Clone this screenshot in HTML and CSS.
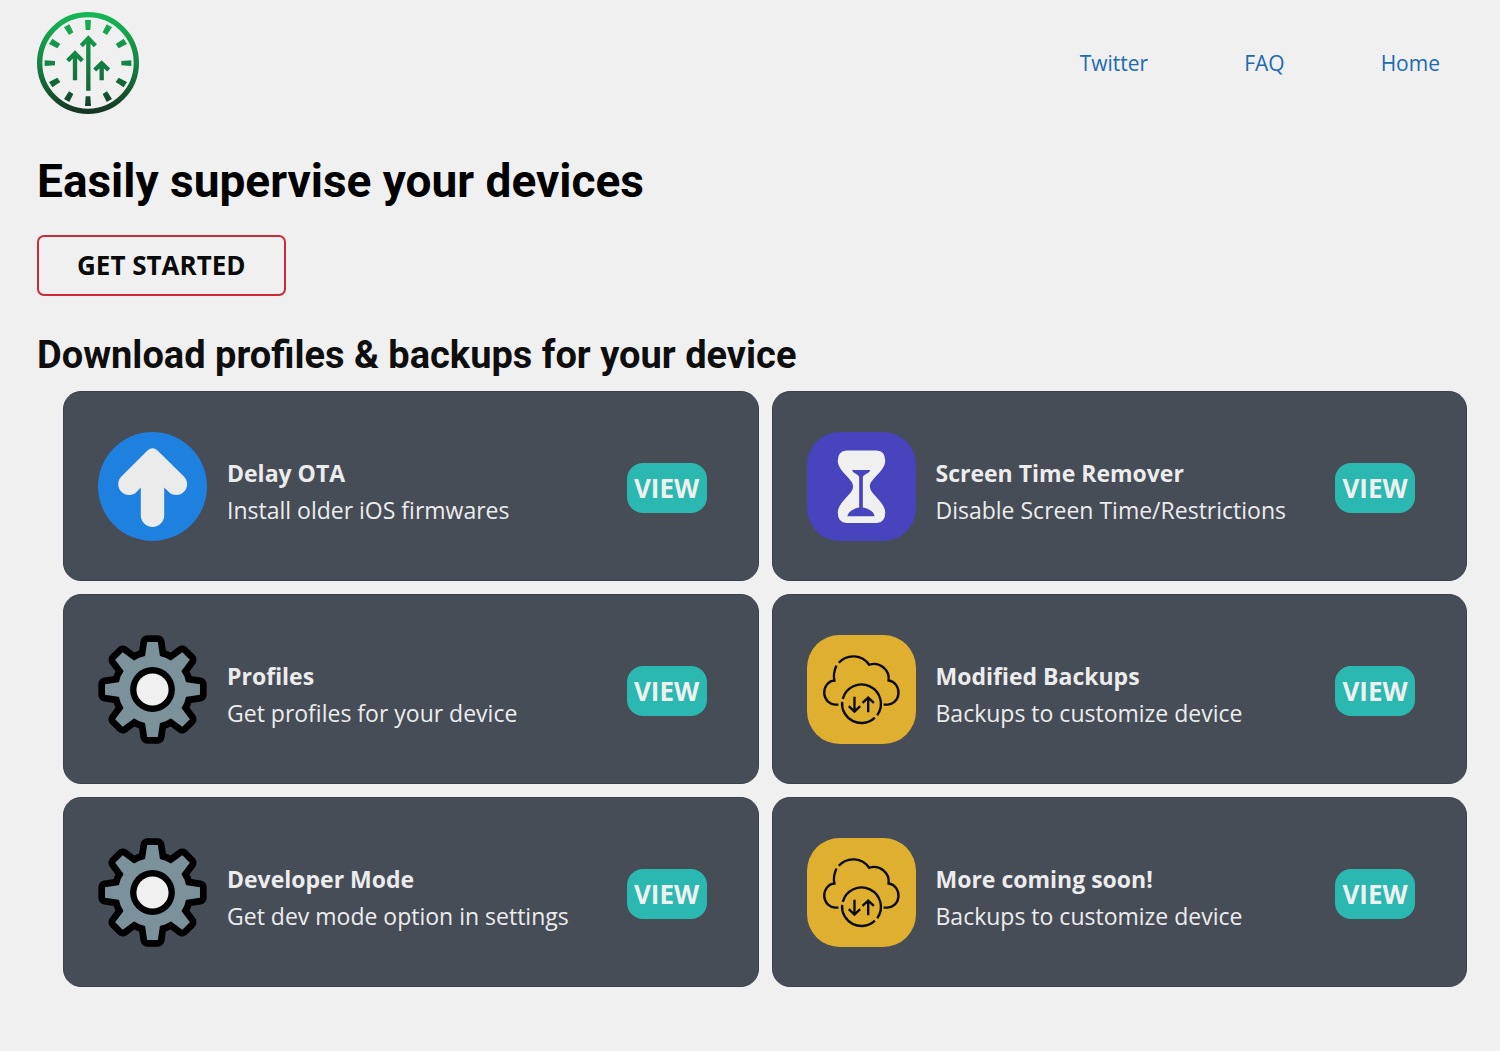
FILE: index.html
```html
<!DOCTYPE html>
<html lang="en">
<head>
  <meta charset="utf-8">
  <meta name="viewport" content="width=device-width, initial-scale=1">
  <title>Easily supervise your devices</title>
  <link rel="stylesheet" href="styles.css">
</head>
<body>
  <svg class="sprite" aria-hidden="true">
    <symbol id="icon-arrow" viewBox="24 21 326 326">
      <circle cx="187" cy="184" r="163" fill="#1e80df"/>
      <path fill="#ebebeb" d="M172 76Q187 63 202 76L281 154A32 32 0 0 1 235 200L222 187V270A35 35 0 0 1 152 270V187L140 200A32 32 0 0 1 94 154Z"/>
    </symbol>
    <symbol id="icon-hourglass" viewBox="21 21 326 326">
      <rect x="21" y="21" width="326" height="326" rx="98" fill="#4744bd"/>
      <path fill="#f0f0f0" d="M140 76H229Q255 77 255 107C254 140 209 160 209 184C209 208 254 228 255 262Q255 293 229 293H140Q113 293 113 262C114 228 159 208 159 184C159 160 114 140 113 107Q113 77 140 76Z"/>
      <path fill="#4744bd" d="M156 135H210C208 145 190 148 188 156V247C200 248 222 258 223 273H142C144 258 166 248 177 247V156C176 148 158 145 156 135Z"/>
    </symbol>
    <symbol id="icon-gear" viewBox="24 21 326 326">
      <defs>
        <path id="tooth" d="M171 42H203L211 96H163Z"/>
        <g id="gear-body">
          <circle cx="187" cy="184" r="103"/>
          <use href="#tooth"/>
          <use href="#tooth" transform="rotate(45 187 184)"/>
          <use href="#tooth" transform="rotate(90 187 184)"/>
          <use href="#tooth" transform="rotate(135 187 184)"/>
          <use href="#tooth" transform="rotate(180 187 184)"/>
          <use href="#tooth" transform="rotate(225 187 184)"/>
          <use href="#tooth" transform="rotate(270 187 184)"/>
          <use href="#tooth" transform="rotate(315 187 184)"/>
        </g>
      </defs>
      <use href="#gear-body" fill="#000" stroke="#000" stroke-width="40" stroke-linejoin="round"/>
      <use href="#gear-body" fill="#7b929b"/>
      <circle cx="187" cy="184" r="67"/>
      <circle cx="187" cy="184" r="48" fill="#f0f0f0"/>
    </symbol>
    <symbol id="icon-cloud" viewBox="21 21 326 326">
      <rect x="21" y="21" width="326" height="326" rx="98" fill="#dfb02f"/>
      <g fill="none" stroke="#0b0a05" stroke-width="7">
        <path d="M115 229H108A33 36 0 0 1 103 157C99 142 103 126 109 112"/>
        <path d="M116 104A58 58 0 0 1 207 110A44 44 0 0 1 265 157A33 36 0 0 1 258 229H250"/>
        <path d="M128 212A58 58 0 1 1 231 261"/>
        <path d="M224 268A58 58 0 0 1 126 221"/>
        <path d="M163 206V250M146 234L163 250L180 234M204 252V208M187 224L204 208L221 224"/>
      </g>
    </symbol>
  </svg>

  <header class="header">
    <a class="logo" href="#" aria-label="Home page">
      <svg class="logo-mark" viewBox="27 22 306 306" aria-hidden="true">
        <defs>
          <linearGradient id="logo-fill" gradientUnits="userSpaceOnUse" x1="0" y1="22" x2="0" y2="328">
            <stop offset="0" stop-color="#14b955"/>
            <stop offset="0.5" stop-color="#148546"/>
            <stop offset="1" stop-color="#163322"/>
          </linearGradient>
          <linearGradient id="arrow-fill" gradientUnits="userSpaceOnUse" x1="0" y1="90" x2="0" y2="260">
            <stop offset="0" stop-color="#149a4b"/>
            <stop offset="1" stop-color="#14633a"/>
          </linearGradient>
        </defs>
        <circle cx="180" cy="175" r="145" fill="none" stroke="url(#logo-fill)" stroke-width="16"/>
        <g fill="url(#logo-fill)">
          <path d="M171 46H189L187 76H173ZM171 304H189L187 275H173Z"/>
          <path d="M50 167V184L81 182V169ZM310 167V184L280 182V169Z"/>
          <path d="M108 68L124 59L136 83L123 91ZM252 68L236 59L224 83L237 91Z"/>
          <path d="M108 283L124 292L136 268L123 260ZM252 283L236 292L224 268L237 260Z"/>
          <path d="M73 102L63 118L88 131L97 118ZM287 102L297 118L272 131L263 118Z"/>
          <path d="M73 248L63 232L88 219L97 232ZM287 248L297 232L272 219L263 232Z"/>
        </g>
        <g fill="none" stroke="url(#arrow-fill)" stroke-width="13">
          <path d="M181 258V100M160 123L181 101L202 123"/>
          <path d="M141 227V146M119 168L141 146L163 168"/>
          <path d="M221 227V176M200 196L221 176L242 196"/>
        </g>
      </svg>
    </a>
    <nav class="nav">
      <a href="#">Twitter</a>
      <a href="#">FAQ</a>
      <a href="#">Home</a>
    </nav>
  </header>

  <main class="main">
    <h1 class="title">Easily supervise your devices</h1>
    <button class="start" type="button">GET STARTED</button>
    <h2 class="subtitle">Download profiles &amp; backups for your device</h2>

    <section class="cards">
      <article class="card">
        <svg class="card-icon" aria-hidden="true"><use href="#icon-arrow"/></svg>
        <div class="card-text"><h3>Delay OTA</h3><p>Install older iOS firmwares</p></div>
        <button class="view" type="button">VIEW</button>
      </article>
      <article class="card">
        <svg class="card-icon" aria-hidden="true"><use href="#icon-hourglass"/></svg>
        <div class="card-text"><h3>Screen Time Remover</h3><p>Disable Screen Time/Restrictions</p></div>
        <button class="view" type="button">VIEW</button>
      </article>
      <article class="card">
        <svg class="card-icon" aria-hidden="true"><use href="#icon-gear"/></svg>
        <div class="card-text"><h3>Profiles</h3><p>Get profiles for your device</p></div>
        <button class="view" type="button">VIEW</button>
      </article>
      <article class="card">
        <svg class="card-icon" aria-hidden="true"><use href="#icon-cloud"/></svg>
        <div class="card-text"><h3>Modified Backups</h3><p>Backups to customize device</p></div>
        <button class="view" type="button">VIEW</button>
      </article>
      <article class="card">
        <svg class="card-icon" aria-hidden="true"><use href="#icon-gear"/></svg>
        <div class="card-text"><h3>Developer Mode</h3><p>Get dev mode option in settings</p></div>
        <button class="view" type="button">VIEW</button>
      </article>
      <article class="card">
        <svg class="card-icon" aria-hidden="true"><use href="#icon-cloud"/></svg>
        <div class="card-text"><h3>More coming soon!</h3><p>Backups to customize device</p></div>
        <button class="view" type="button">VIEW</button>
      </article>
    </section>
  </main>
</body>
</html>
```
FILE: styles.css
```css
* {
  box-sizing: border-box;
}

body {
  margin: 0;
  background: #f0f0f0;
  color: #000;
  font-family: "Open Sans", sans-serif;
}

h1, h2, h3, p {
  margin: 0;
}

button {
  font-family: inherit;
  cursor: pointer;
}

.sprite {
  position: absolute;
  width: 0;
  height: 0;
}

.header {
  display: flex;
  align-items: center;
  justify-content: space-between;
  padding: 12px 60px 0 37px;
}

.logo-mark {
  display: block;
  width: 102px;
  height: 102px;
}

.nav {
  display: flex;
  gap: 96px;
}

.nav a {
  color: #2069b2;
  font-size: 21px;
  line-height: 28px;
  text-decoration: none;
}

.main {
  padding: 39px 33px 40px 37px;
}

.title {
  font: 700 46px/56px Roboto, sans-serif;
}

.start {
  display: block;
  margin: 26px 0 33px;
  padding: 10px 38px 11px;
  border: 2px solid #cb2b38;
  border-radius: 7px;
  background: transparent;
  color: #0b0b0b;
  font-size: 26px;
  font-weight: 700;
  line-height: 36px;
}

.subtitle {
  color: #0e0e0e;
  font: 700 38px/52px Roboto, sans-serif;
}

.cards {
  display: grid;
  grid-template-columns: 1fr 1fr;
  gap: 13px;
  margin: 10px 0 0 26px;
}

.card {
  display: flex;
  align-items: center;
  min-height: 190px;
  padding: 0 51px 0 34px;
  border: 1px solid #3b404b;
  border-radius: 18px;
  background: #474d57;
  color: #ececec;
}

.card-icon {
  flex: none;
  width: 109px;
  height: 109px;
}

.card-text {
  flex: 1;
  padding: 12px 0 0 20px;
}

.card-text h3 {
  font-size: 23px;
  font-weight: 700;
  line-height: 37px;
}

.card-text p {
  font-size: 23px;
  line-height: 37px;
}

.view {
  width: 80px;
  height: 50px;
  margin-top: 3px;
  padding: 0;
  border: 0;
  border-radius: 16px;
  background: #2ab8b1;
  color: #f0f0f0;
  font-size: 26px;
  font-weight: 700;
}
```
